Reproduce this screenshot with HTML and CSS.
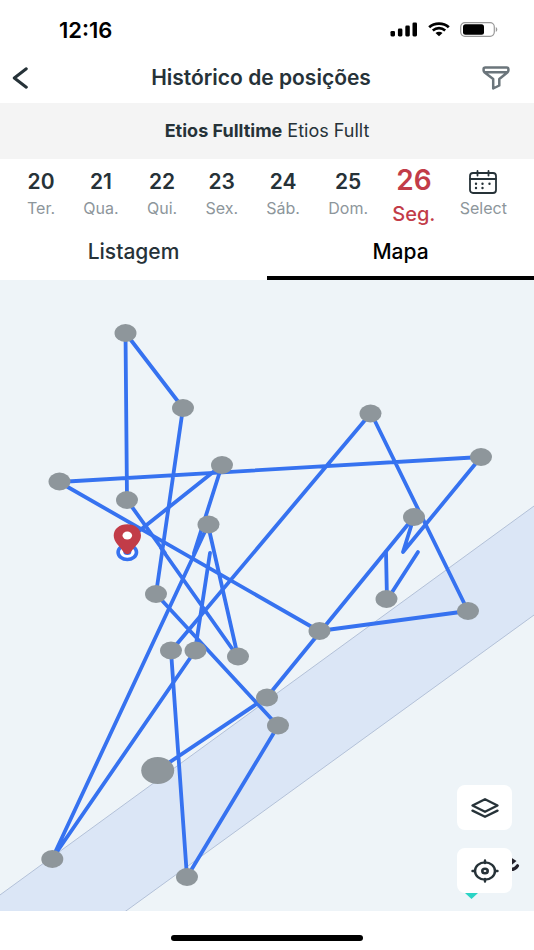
FILE: index.html
```
<!DOCTYPE html>
<html lang="pt-BR">
<head>
  <meta charset="UTF-8" />
  <meta name="viewport" content="width=device-width, initial-scale=1" />
  <title>Histórico de posições</title>
  <link rel="stylesheet" href="styles.css">
</head>
<body>
  <div class="app">
    <div class="status-bar">
      <span class="clock">12:16</span>
      <div class="status-icons">
        <svg width="28" height="15" viewBox="0 0 28 15">
          <rect x="0.500" y="9" width="4.500" height="5.400" rx="1.300" />
          <rect x="7.900" y="6.600" width="4.500" height="7.800" rx="1.300" />
          <rect x="15.300" y="3.600" width="4.500" height="10.800" rx="1.300" />
          <rect x="22.500" y="0.500" width="4.500" height="13.900" rx="1.300" />
        </svg>
        <svg width="22" height="15" viewBox="0 0 22 15">
          <path d="M1.200 5.200C6.600.3 15.400.3 20.800 5.200" fill="none" stroke="#000" stroke-width="2.800" />
          <path d="M4.800 8.400C8.400 5.300 13.600 5.300 17.200 8.400" fill="none" stroke="#000" stroke-width="2.600" />
          <path d="M7.500 11C9.500 9.300 12.500 9.300 14.500 11L11 14.300Z" />
        </svg>
        <svg width="38" height="15" viewBox="0 0 38 15">
          <rect x="0.700" y="0.700" width="33.600" height="13.600" rx="4.200" fill="none" stroke="#999" stroke-width="1.200" />
          <rect x="3" y="2.300" width="21" height="10.400" rx="2.500" />
          <path d="M35.800 5v5c2-1 2-4 0-5Z" fill="#999" />
        </svg>
      </div>
    </div>

    <header class="header">
      <button class="icon-btn" type="button" aria-label="Voltar">
        <svg width="16" height="22" viewBox="0 0 16 22" fill="none" stroke="#263238" stroke-width="3" stroke-linecap="round" stroke-linejoin="round"><path d="M14.300 1.800L2.300 11L14.300 20.200" /></svg>
      </button>
      <h1>Histórico de posições</h1>
      <button class="icon-btn" type="button" aria-label="Filtrar">
        <svg width="28" height="24" viewBox="0 0 28 24" fill="none" stroke="#6b757b" stroke-width="2.500" stroke-linejoin="round"><path d="M3.400 1.500H24.600Q26.400 1.500 26.400 3V4.500Q26.400 5.500 25.300 6.500L17.300 13V19.500L11.200 22.500V13L2.700 6.500Q1.600 5.500 1.600 4.500V3Q1.600 1.500 3.400 1.500ZM2 6.300H26" /></svg>
      </button>
    </header>

    <div class="vehicle"><strong>Etios Fulltime</strong> Etios Fullt</div>

    <nav class="days">
      <button class="day" type="button"><b>20</b><span>Ter.</span></button>
      <button class="day" type="button"><b>21</b><span>Qua.</span></button>
      <button class="day" type="button"><b>22</b><span>Qui.</span></button>
      <button class="day" type="button"><b>23</b><span>Sex.</span></button>
      <button class="day" type="button"><b>24</b><span>Sáb.</span></button>
      <button class="day" type="button"><b>25</b><span>Dom.</span></button>
      <button class="day active" type="button"><b>26</b><span>Seg.</span></button>
      <button class="day" type="button">
        <svg width="28" height="24" viewBox="0 0 28 24" fill="none" stroke="#263238" stroke-width="1.800" stroke-linecap="round">
          <rect x="1" y="3" width="26" height="20" rx="3" />
          <path d="M1 9H27M8.500 1V5.500M19.500 1V5.500" />
          <path d="M7 13.700h.01M13.500 13.700h.01M20.500 13.700h.01M7 18h.01M13.500 18h.01" stroke-width="2.400" />
        </svg>
        <span>Select</span>
      </button>
    </nav>

    <div class="tabs" role="tablist">
      <button class="tab" type="button" role="tab" aria-selected="false">Listagem</button>
      <button class="tab selected" type="button" role="tab" aria-selected="true">Mapa</button>
    </div>

    <main class="map">
      <svg class="route" viewBox="0 280 534 631">
        <path class="road" d="M-5 898.600L539 502.400V611.400L119 916H-5Z" />

        <g class="track">
          <path d="M127 500L125.500 333L183 408L156 594L278 726L187 877L171 651L371 413L468 611L319 631L59 482L481 457L403 552L414 517L267 697L158 770" />
          <path d="M139 531L222 465L194 553" />
          <path d="M127 500L165 553M161 548L238 657L208 525L52 859L195 651L210 553" />
          <path d="M386 552L387 600L418 552" />
        </g>

        <g class="points">
          <ellipse cx="125.500" cy="333" rx="11" ry="9" />
          <ellipse cx="183" cy="408" rx="11" ry="9" />
          <ellipse cx="222" cy="465" rx="11" ry="9" />
          <ellipse cx="59.500" cy="481.500" rx="11" ry="9" />
          <ellipse cx="127" cy="500" rx="11" ry="9" />
          <ellipse cx="208.500" cy="524.500" rx="11" ry="9" />
          <ellipse cx="370.500" cy="413.500" rx="11" ry="9" />
          <ellipse cx="481" cy="457" rx="11" ry="9" />
          <ellipse cx="414" cy="517" rx="11" ry="9" />
          <ellipse cx="468" cy="611" rx="11" ry="9" />
          <ellipse cx="386.500" cy="599" rx="11" ry="9" />
          <ellipse cx="319.500" cy="631" rx="11" ry="9" />
          <ellipse cx="156" cy="594" rx="11" ry="9" />
          <ellipse cx="171" cy="650.500" rx="11" ry="9" />
          <ellipse cx="195.500" cy="650.500" rx="11" ry="9" />
          <ellipse cx="238" cy="656.500" rx="11" ry="9" />
          <ellipse cx="267" cy="697.500" rx="11" ry="9" />
          <ellipse cx="278" cy="725.500" rx="11" ry="9" />
          <ellipse cx="157.700" cy="770.500" rx="16.500" ry="13.500" />
          <ellipse cx="52.300" cy="859" rx="11" ry="9" />
          <ellipse cx="187" cy="877" rx="11" ry="9" />
        </g>

        <!-- current position -->
        <ellipse cx="127.300" cy="552.200" rx="9.200" ry="7.300" fill="#fff" stroke="#3672f0" stroke-width="3.600" />
        <ellipse cx="127.300" cy="552" rx="4" ry="3" fill="#3672f0" />
        <path fill="#c23c48" fill-rule="evenodd" d="M127.300 524.200C119.500 524.200 113.700 529 113.700 535.500C113.700 542 119.500 546 123.500 552Q127.300 556.500 131 552C135 546 141 542 141 535.500C141 529 135 524.200 127.300 524.200Z" />
        <ellipse cx="127.300" cy="535.500" rx="4.800" ry="4" fill="#fff" />

        <!-- heading marker, half hidden by the locate button -->
        <path d="M465 893H478L471.500 899Z" fill="#2bd4c5" />
        <path d="M511 857.500L516.500 861L511 865.500Z" fill="#24212b" />
        <path d="M511 869.500Q515 869.500 517.500 865.800" fill="none" stroke="#24212b" stroke-width="3.200" stroke-linecap="round" />
      </svg>

      <div class="map-controls">
        <button type="button" aria-label="Camadas">
          <svg width="28" height="20" viewBox="0 0 28 20" fill="none" stroke="#263238" stroke-width="2.300" stroke-linecap="round" stroke-linejoin="round"><path d="M14 1.200L26.500 7.500L14 13.800L1.500 7.500ZM1.500 12.600L14 18.800L26.500 12.600" /></svg>
        </button>
        <button type="button" aria-label="Minha posição">
          <svg width="28" height="24" viewBox="0 0 28 24" fill="none" stroke="#263238" stroke-width="2.400" stroke-linecap="round"><ellipse cx="14" cy="12" rx="10" ry="8.600" /><ellipse cx="14" cy="12" rx="2.700" ry="2.200" stroke-width="2.600" /><path d="M14 1.500V4M14 20V22.500M1.500 12H4M24 12H26.500" /></svg>
        </button>
      </div>
    </main>

    <div class="home-bar"></div>
  </div>
</body>
</html>
```
FILE: styles.css
```
* { box-sizing: border-box; }
body { margin: 0; background: #fff; color: #263238; font-family: Inter, "Liberation Sans", sans-serif; }
button { border: 0; padding: 0; background: none; color: inherit; font: inherit; cursor: pointer; }
svg { display: block; }

.app { display: flex; flex-direction: column; min-height: 100vh; }

.status-bar { display: flex; align-items: center; justify-content: space-between; height: 53px; padding: 6px 36px 0 59px; color: #000; }
.clock { font-size: 22px; line-height: 24px; font-weight: 600; }
.status-icons { display: flex; align-items: center; gap: 10px; }

.header { display: flex; align-items: center; justify-content: space-between; height: 50px; padding: 0 24px 0 12px; }
.header h1 { margin: 0; font-size: 21px; line-height: 24px; font-weight: 600; }
.icon-btn { width: 28px; }

.vehicle { padding: 16px; background: #f4f4f4; text-align: center; font-size: 18px; line-height: 24px; }
.vehicle strong { font-weight: 700; }

.days { display: flex; justify-content: space-between; align-items: flex-start; height: 68px; padding: 11px 27px 0; }
.day { display: flex; flex-direction: column; align-items: center; gap: 4px; }
.day b { font-size: 21px; line-height: 24px; font-weight: 600; }
.day span { color: #8d969b; font-size: 16px; line-height: 20px; }
.day.active { gap: 8px; margin: -4px -4px 0; }
.day.active b { color: #c23c48; font-size: 28px; line-height: 28px; }
.day.active span { color: #c23c48; font-size: 20px; line-height: 24px; font-weight: 500; }

.tabs { display: flex; height: 53px; }
.tab { flex: 1; border-bottom: 4px solid transparent; font-size: 21px; line-height: 24px; font-weight: 500; }
.tab.selected { border-bottom-color: #000; color: #000; }

.map { position: relative; background: #eef4f8; }
.route { width: 100%; height: auto; }
.road { fill: #dbe6f6; stroke: #b3c1d8; stroke-width: 1; }
.track { fill: none; stroke: #3672f0; stroke-width: 3.8; stroke-linecap: round; stroke-linejoin: round; }
.points { fill: #8e969b; }

.map-controls { position: absolute; right: 22px; bottom: 18px; display: flex; flex-direction: column; gap: 18px; }
.map-controls button { display: flex; align-items: center; justify-content: center; width: 55px; height: 45px; border-radius: 8px; background: #fff; }

.home-bar { display: flex; justify-content: center; padding: 24px 0 9px; }
.home-bar::after { content: ""; width: 36%; height: 6px; border-radius: 3px; background: #000; }
```
